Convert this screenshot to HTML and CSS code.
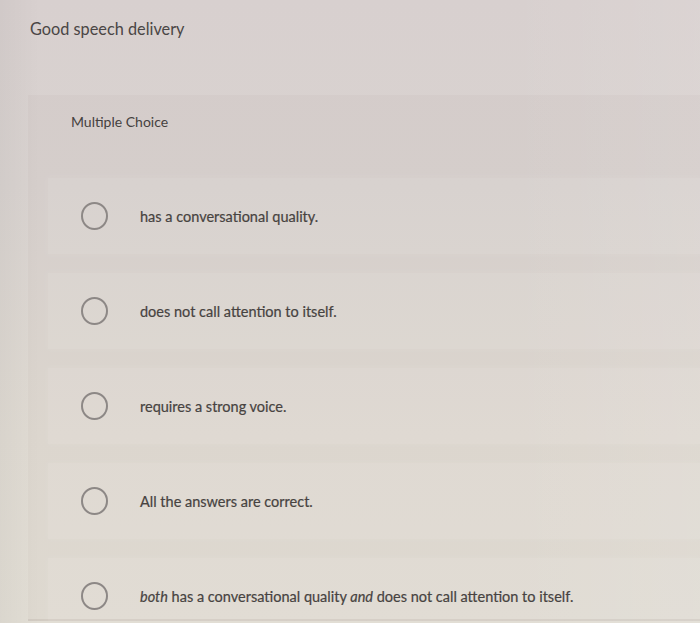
FILE: index.html
```html
<!DOCTYPE html>
<html lang="en">
<head>
<meta charset="utf-8">
<title>Good speech delivery</title>
<link rel="stylesheet" href="styles.css">
</head>
<body>
<div class="page">
  <h1 class="title">Good speech delivery</h1>
  <section class="panel">
    <div class="kind">Multiple Choice</div>
    <ul class="options">
      <li class="option"><span class="radio"></span><span class="label">has a conversational quality.</span></li>
      <li class="option"><span class="radio"></span><span class="label">does not call attention to itself.</span></li>
      <li class="option"><span class="radio"></span><span class="label">requires a strong voice.</span></li>
      <li class="option"><span class="radio"></span><span class="label">All the answers are correct.</span></li>
      <li class="option"><span class="radio"></span><span class="label"><em>both</em> has a conversational quality <em>and</em> does not call attention to itself.</span></li>
    </ul>
  </section>
</div>
</body>
</html>
```

FILE: styles.css
```css
html, body {
  margin: 0;
  padding: 0;
}
body {
  width: 700px;
  height: 623px;
  overflow: hidden;
  font-family: Lato, "Open Sans", "Liberation Sans", sans-serif;
  background: linear-gradient(180deg, #d8d0cf 0%, #d9d3d0 30%, #e0dbd3 70%, #e2ded5 100%);
}
.page {
  height: 623px;
  overflow: hidden;
  background: linear-gradient(90deg, rgba(0,0,0,0.035) 0px, rgba(0,0,0,0) 40px, rgba(255,255,255,0) 500px, rgba(255,255,255,0.08) 700px);
}
.title {
  margin: 0;
  padding: 19px 0 0 30px;
  font-size: 16.3px;
  line-height: 20px;
  font-weight: 400;
  color: #4a4645;
}
.panel {
  margin: 56px 0 0 28px;
  padding: 18px 0 0 0;
  height: 508px;
  overflow: hidden;
  background: rgba(120, 100, 95, 0.04);
  box-shadow: inset 0 -2px 0 rgba(120, 110, 100, 0.12);
}
.kind {
  padding-left: 43px;
  font-size: 14px;
  line-height: 18px;
  color: #45413f;
}
.options {
  list-style: none;
  margin: 47px 0 0 0;
  padding: 0;
}
.option {
  display: flex;
  align-items: center;
  height: 76px;
  margin: 0 0 19px 20px;
  padding-left: 33px;
  background: rgba(255, 255, 255, 0.09);
  box-shadow: 0 0 8px 4px rgba(255, 255, 255, 0.04);
}
.radio {
  flex: none;
  width: 23px;
  height: 24px;
  border: 2px solid #8d8886;
  border-radius: 50%;
  margin-right: 32px;
}
.label {
  font-size: 14.5px;
  color: #474341;
  -webkit-text-stroke: 0.2px #474341;
}
.label em {
  font-style: italic;
}
```
